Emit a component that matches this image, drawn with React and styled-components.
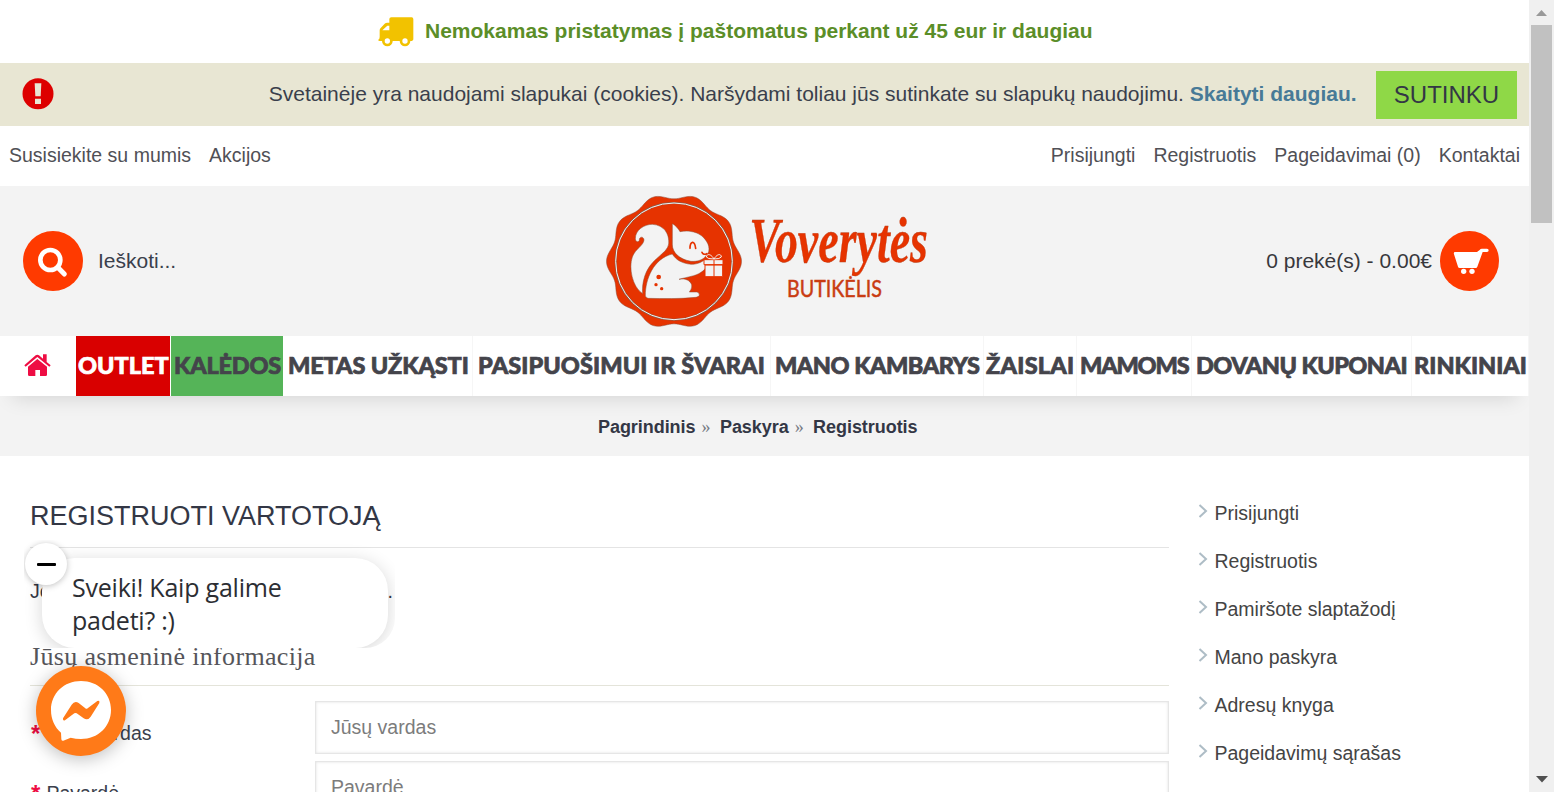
import React from "react";
import styled, { createGlobalStyle } from "styled-components";

const Global = createGlobalStyle`
  * { box-sizing: border-box; }
  body { margin: 0; overflow: hidden; background: #fff; font-family: "Liberation Sans", Arial, sans-serif; }
  a { color: inherit; text-decoration: none; }
`;

const Shell = styled.div`
  position: relative;
  display: grid;
  grid-template-columns: 1529px 25px;
  height: 792px;
  overflow: hidden;
`;
const Page = styled.div`height: 792px; overflow: hidden;`;

const Promo = styled.div`
  display: flex;
  align-items: center;
  height: 63px;
  padding: 0 0 1px 378px;
  color: #5b8e28;
  font-size: 21px;
  font-weight: 700;
  svg { margin: 2px 11px 0 0; }
`;

const CookieBar = styled.div`
  display: flex;
  align-items: center;
  height: 63px;
  padding: 0 12px 0 22px;
  background: #e8e6d3;
  color: #3a3f4c;
  font-size: 21px;
  svg { margin-bottom: 1px; }
`;
const CookieText = styled.p`
  margin: 0 19.4px 2px auto;
  a { color: #477a97; font-weight: 700; }
`;
const AgreeButton = styled.button`
  width: 141px;
  height: 48px;
  padding: 0;
  border: 0;
  background: #8fd847;
  color: #333745;
  font: 24px "Liberation Sans", Arial, sans-serif;
`;

const TopLinks = styled.nav`
  display: flex;
  align-items: center;
  gap: 18px;
  height: 60px;
  padding: 0 9px 2px;
  color: #505056;
  font-size: 19.5px;
`;
const Spacer = styled.span`flex: 1;`;

const Header = styled.header`
  display: grid;
  grid-template-columns: 600px 340px 1fr;
  height: 150px;
  background: #f3f3f3;
`;
const HeaderSide = styled.div`
  display: flex;
  align-items: center;
  justify-content: ${(p) => (p.$end ? "flex-end" : "flex-start")};
  gap: ${(p) => (p.$end ? 8 : 15)}px;
  padding: 0 30px 0 23px;
  color: ${(p) => (p.$end ? "#38383c" : "#3a3f4c")};
  font-size: 21px;
`;
const RoundButton = styled.span`
  display: block;
  width: ${(p) => p.$width || 60}px;
  height: 60px;
  border-radius: 50%;
  background: #ff3a00;
  svg { display: block; }
`;

const Menu = styled.nav`
  position: relative;
  display: flex;
  height: 60px;
  background: #fff;
  box-shadow: 0 14px 20px -12px rgba(0, 0, 0, 0.13);
`;
const MenuItem = styled.a`
  display: flex;
  align-items: center;
  flex: none;
  width: ${(p) => p.$width}px;
  padding: 0 0 3px ${(p) => p.$pad}px;
  border-right: 1px solid ${(p) => (p.$bg ? "#fff" : "#f6f6f6")};
  background: ${(p) => p.$bg || "#fff"};
  background-clip: padding-box;
  color: ${(p) => p.$color || "#44444b"};
  font-family: Lato, sans-serif;
  font-size: 23.5px;
  font-weight: 900;
  letter-spacing: ${(p) => p.$spacing || 0}px;
  white-space: nowrap;
  -webkit-text-stroke: 0.7px currentColor;
  svg { margin: 2px 0 0 -0.5px; }
`;

const Crumbs = styled.div`
  display: flex;
  align-items: center;
  height: 60px;
  padding: 2px 0 0 598px;
  background: #f3f3f3;
  color: #333745;
  font-size: 18px;
  font-weight: 700;
  letter-spacing: -0.05px;
`;
const Arrow = styled.span`
  margin: 0 9.5px 0 6px;
  color: #777b84;
  font-family: "Liberation Serif", serif;
  font-weight: 400;
`;

const Main = styled.main`
  display: grid;
  grid-template-columns: 1139px 1fr;
  gap: 29px;
  padding: 33px 30px 0;
`;
const Content = styled.section``;
const Title = styled.h1`
  height: 59px;
  margin: 0;
  border-bottom: 1px solid #e4e4e4;
  color: #333745;
  font-size: 27px;
  font-weight: 400;
  line-height: 54px;
`;
const Intro = styled.p`
  height: 88px;
  margin: 0;
  color: #333745;
  font-size: 19.5px;
  line-height: 86px;
  letter-spacing: 0.1px;
`;
const Legend = styled.h2`
  height: 50px;
  margin: 0 0 15px;
  border-bottom: 1px solid #e4e4da;
  color: #55555a;
  font-family: "Liberation Serif", serif;
  font-size: 26px;
  font-weight: 400;
  line-height: 42px;
  letter-spacing: 0.34px;
`;
const Field = styled.label`
  display: grid;
  grid-template-columns: 285px 1fr;
  height: 60px;
  color: #3a3f4c;
  font-size: 19.5px;
  line-height: 64px;
`;
const Star = styled.b`
  display: inline-block;
  width: 11px;
  padding-left: 1px;
  color: #ee0d43;
  font-size: 24px;
  line-height: 20px;
  vertical-align: -2px;
`;
const Input = styled.input`
  height: 53px;
  padding: 0 15px;
  border: 1px solid #e6e6e6;
  box-shadow: inset 0 0 3px rgba(0, 0, 0, 0.12);
  outline: 0;
  font: 19.5px "Liberation Sans", Arial, sans-serif;
  &::placeholder { color: #7c7c7c; opacity: 1; }
`;
const SideList = styled.aside`
  display: flex;
  flex-direction: column;
  color: #444;
  font-size: 19.5px;
`;
const SideLink = styled.a`
  display: flex;
  align-items: center;
  gap: 6.5px;
  height: 48px;
  svg { margin-top: -4px; }
`;

const Scrollbar = styled.div`
  display: flex;
  flex-direction: column;
  align-items: center;
  justify-content: space-between;
  height: 792px;
  padding-bottom: 9px;
  background: #f0f0f0;
`;
const Thumb = styled.div`width: 21px; height: 198px; margin-top: 15px; background: #c1c1c1;`;
const ScrollTop = styled.div`
  display: flex;
  flex-direction: column;
  align-items: center;
  padding-top: 10px;
  svg { display: block; height: 6px; margin-bottom: -6px; }
`;

const ChatFrame = styled.div`
  position: absolute;
  left: 24px;
  top: 540px;
  width: 371px;
  height: 108px;
  padding: 18px 0 0 18px;
  overflow: hidden;
  border-bottom-right-radius: 30px;
`;
const ChatBubble = styled.div`
  width: 346px;
  height: 90px;
  padding: 13px 30px;
  border-radius: 33px;
  background: #fff;
  box-shadow: 0 3px 18px rgba(0, 0, 0, 0.16);
  color: #2c2e33;
  font-family: "Open Sans", "Noto Sans", sans-serif;
  font-size: 25px;
  font-weight: 400;
  line-height: 33px;
  letter-spacing: -0.22px;
`;
const Minimize = styled.div`
  position: absolute;
  left: 1px;
  top: 3px;
  display: grid;
  place-items: center;
  width: 42px;
  height: 42px;
  border-radius: 50%;
  background: #fff;
  box-shadow: 0 1px 6px rgba(0, 0, 0, 0.25);
  &::after { content: ""; width: 19px; height: 3px; border-radius: 1px; background: #000; }
`;
const Messenger = styled.div`
  position: absolute;
  left: 36px;
  top: 666px;
  width: 90px;
  height: 90px;
  border-radius: 50%;
  background: #ff7a18;
  box-shadow: 0 3px 18px rgba(0, 0, 0, 0.26);
  svg { display: block; }
`;

const Truck = () => (
  <svg width="36" height="30" viewBox="0 0 108 90">
    <path fill="#f2c200" fillRule="evenodd" d="M40 1 H101 Q106 1 106 7 V66 Q106 72 97 72 H5 Q0 72 1 68 Q5 66 5 60 V40 Q5 36 8 33 L20 20 Q23 17 28 17 H34 V6 Q34 1 40 1 Z M28 26 L13 40 H34 V26 Z" />
    <circle cx="28" cy="72" r="16" fill="#f2c200" /><circle cx="81" cy="72" r="16" fill="#f2c200" />
    <circle cx="28" cy="72" r="8" fill="#fff" /><circle cx="81" cy="72" r="8" fill="#fff" />
  </svg>
);
const Alert = () => (
  <svg width="32" height="32" viewBox="0 0 96 96">
    <circle cx="48" cy="47" r="46.5" fill="#d00" />
    <path fill="#e8e6d3" d="M38 16 H58 L56 55 H40 Z M39 62 H57 V78 H39 Z" />
  </svg>
);
const SearchIcon = () => (
  <svg width="60" height="60" viewBox="0 0 180 180" fill="none" stroke="#fff">
    <circle cx="82" cy="87" r="30" strokeWidth="14" />
    <path d="M104 109 L124 129" strokeWidth="15" strokeLinecap="round" />
  </svg>
);
const CartIcon = () => (
  <svg width="59" height="60" viewBox="1 0 177 180" fill="#fff">
    <path d="M46 63 H112 L120 57 Q122 53 127 53 H142 Q147 53 147 58 Q147 63 142 63 H129 L113 107 Q112 111 108 111 H60 Q56 111 55 107 L43 70 Q41 63 46 63 Z" />
    <circle cx="72" cy="121" r="8" /><circle cx="97" cy="121" r="8" />
  </svg>
);
const HomeIcon = () => (
  <svg width="27" height="24" viewBox="0 0 81 72" fill="#ee0d43" stroke="none">
    <path d="M12 38 L40 15 L69 38 V62 Q69 66 65 66 H48 V48 H34 V66 H16 Q12 66 12 62 Z" />
    <path d="M1 34 L35 4 Q40 0 45 4 L57 14 V1 H68 V24 L80 34 L76 38 L40 9 L5 38 Z" />
  </svg>
);
const Chevron = () => (
  <svg width="10" height="14" viewBox="0 0 10 14" fill="none" stroke="#aebdc6" strokeWidth="2">
    <path d="M1.5 1 L8 7 L1.5 13" />
  </svg>
);

const badge = Array.from({ length: 180 }, (_, i) => {
  const t = (i * Math.PI) / 90;
  const r = 195 + 7.5 * Math.cos(10 * t);
  return `${(222 + r * Math.cos(t)).toFixed(1)},${(226 + r * Math.sin(t)).toFixed(1)}`;
}).join(" ");

const Logo = () => (
  <svg width="340" height="150" viewBox="0 0 1020 450" overflow="visible">
    <polygon points={badge} fill="#e63300" stroke="#8d4b36" strokeWidth="1.5" />
    <circle cx="222" cy="226" r="175" fill="none" stroke="#8d5b48" strokeWidth="6" />
    <circle cx="222" cy="226" r="175" fill="none" stroke="#f3f3f3" strokeWidth="3" />
    <g fill="#f3f3f3" stroke="#8d4b30" strokeWidth="1.5">
      <path d="M128 323 C96 302 86 245 97 213 C106 188 130 180 132 162 C131 150 117 151 118 163 C116 170 107 168 106 159 C105 133 132 115 157 115 C193 117 209 145 206 174 C202 202 160 214 140 256 C129 280 126 304 128 323 Z" />
      <path d="M217 113 C226 117 236 129 240 137 C267 132 295 138 311 155 C325 170 329 184 326 197 C324 204 319 203 318 209 C310 222 292 227 273 226 C239 220 216 200 217 174 Z" />
      <path d="M136 328 C136 280 160 218 217 204 C227 221 245 232 273 235 C296 235 306 226 314 222 L323 234 C320 248 303 263 281 269 C263 274 250 276 237 280 C258 276 270 284 275 296 C277 307 270 315 268 318 H291 Q299 320 298 328 Q296 333 288 334 C240 339 188 338 145 337 Q136 336 136 328 Z" />
    </g>
    <g fill="none" stroke="#e63300" strokeLinecap="round" strokeWidth="5">
      <path d="M270 187 C270 166 284 160 287 187 M306 199 Q310 208 320 203" />
    </g>
    <g fill="#e63300"><circle cx="176" cy="273" r="7" /><circle cx="168" cy="296" r="5" /><circle cx="185" cy="308" r="5" /></g>
    <g fill="#f3f3f3" stroke="#e63300" strokeWidth="3">
      <path d="M312 221 H369 V236 H312 Z M315 237 H368 V272 H315 Z M342 221 V272" />
      <path d="M342 219 C332 202 320 203 319 213 Q322 219 342 219 C352 202 364 203 364 213 Q360 219 342 219" stroke="#f3f3f3" fill="#e63300" />
    </g>
    <text x="448" y="228" textLength="536" lengthAdjust="spacingAndGlyphs" fill="#e63300" stroke="#b5441f" strokeWidth="1" fontFamily="Liberation Serif, serif" fontStyle="italic" fontWeight="700" fontSize="190">Voverytės</text>
    <text x="561" y="332" textLength="285" lengthAdjust="spacingAndGlyphs" fill="#c93c12" stroke="#c93c12" strokeWidth="1.5" fontFamily="Lato, sans-serif" fontSize="70">BUTIKĖLIS</text>
  </svg>
);

const menu = [
  { label: "OUTLET", width: 95, pad: 2, bg: "#d90000", color: "#fff" },
  { label: "KALĖDOS", width: 113, pad: 3, bg: "#55b458", spacing: -0.2 },
  { label: "METAS UŽKĄSTI", width: 189, pad: 4, spacing: -0.12 },
  { label: "PASIPUOŠIMUI IR ŠVARAI", width: 298, pad: 5, spacing: 0.08 },
  { label: "MANO KAMBARYS", width: 213, pad: 4, spacing: -0.5 },
  { label: "ŽAISLAI", width: 93, pad: 2, spacing: 0.25 },
  { label: "MAMOMS", width: 115, pad: 3, spacing: -1.2 },
  { label: "DOVANŲ KUPONAI", width: 220, pad: 4, spacing: -0.55 },
  { label: "RINKINIAI", width: 117, pad: 2 },
];
const account = ["Prisijungti", "Registruotis", "Pamiršote slaptažodį", "Mano paskyra", "Adresų knyga", "Pageidavimų sąrašas"];

export default function App() {
  return (
    <Shell>
      <Global />
      <Page>
        <Promo><Truck />Nemokamas pristatymas į paštomatus perkant už 45 eur ir daugiau</Promo>
        <CookieBar>
          <Alert />
          <CookieText>Svetainėje yra naudojami slapukai (cookies). Naršydami toliau jūs sutinkate su slapukų naudojimu. <a href="#more">Skaityti daugiau.</a></CookieText>
          <AgreeButton>SUTINKU</AgreeButton>
        </CookieBar>
        <TopLinks>
          <a href="#c">Susisiekite su mumis</a><a href="#a">Akcijos</a><Spacer />
          <a href="#p">Prisijungti</a><a href="#r">Registruotis</a><a href="#w">Pageidavimai (0)</a><a href="#k">Kontaktai</a>
        </TopLinks>
        <Header>
          <HeaderSide><RoundButton><SearchIcon /></RoundButton>Ieškoti...</HeaderSide>
          <Logo />
          <HeaderSide $end>0 prekė(s) - 0.00€<RoundButton $width={59}><CartIcon /></RoundButton></HeaderSide>
        </Header>
        <Menu>
          <MenuItem $width={76} $pad={24} $bg="#fff"><HomeIcon /></MenuItem>
          {menu.map((m) => (
            <MenuItem key={m.label} href="#m" $width={m.width} $pad={m.pad} $bg={m.bg} $color={m.color} $spacing={m.spacing}>{m.label}</MenuItem>
          ))}
        </Menu>
        <Crumbs>Pagrindinis<Arrow>»</Arrow>Paskyra<Arrow>»</Arrow>Registruotis</Crumbs>
        <Main>
          <Content>
            <Title>REGISTRUOTI VARTOTOJĄ</Title>
            <Intro>Jei jau turite paskyrą, prašome prisijungti.</Intro>
            <Legend>Jūsų asmeninė informacija</Legend>
            <Field><span><Star>*</Star> Jūsų vardas</span><Input placeholder="Jūsų vardas" /></Field>
            <Field><span><Star>*</Star> Pavardė</span><Input placeholder="Pavardė" /></Field>
          </Content>
          <SideList>
            {account.map((label) => <SideLink key={label} href="#s"><Chevron />{label}</SideLink>)}
          </SideList>
        </Main>
      </Page>
      <Scrollbar>
        <ScrollTop>
          <svg width="11" height="6" viewBox="0 0 11 6"><path d="M0 6 L5.5 0 L11 6Z" fill="#999" /></svg>
          <Thumb />
        </ScrollTop>
        <svg width="12" height="7" viewBox="0 0 12 7"><path d="M0 0 H12 L6 6.5Z" fill="#505050" /></svg>
      </Scrollbar>
      <ChatFrame>
        <ChatBubble>Sveiki! Kaip galime<br />padeti? :)</ChatBubble>
        <Minimize />
      </ChatFrame>
      <Messenger>
        <svg width="90" height="90" viewBox="0 0 270 270">
          <path fill="#fff" d="M135 45 C186 45 225 82 225 132 C225 182 186 219 135 219 Q119 219 104 215 L82 224 Q76 226 76 219 L75 200 C56 184 45 160 45 132 C45 82 84 45 135 45 Z" />
          <path fill="#ff7a18" d="M81 157 L107 116 Q116 103 128 111 L148 127 Q151 130 155 127 L184 105 Q192 102 190 111 L164 152 Q155 165 143 157 L122 142 Q119 140 115 142 L87 163 Q80 166 81 157 Z" />
        </svg>
      </Messenger>
    </Shell>
  );
}
